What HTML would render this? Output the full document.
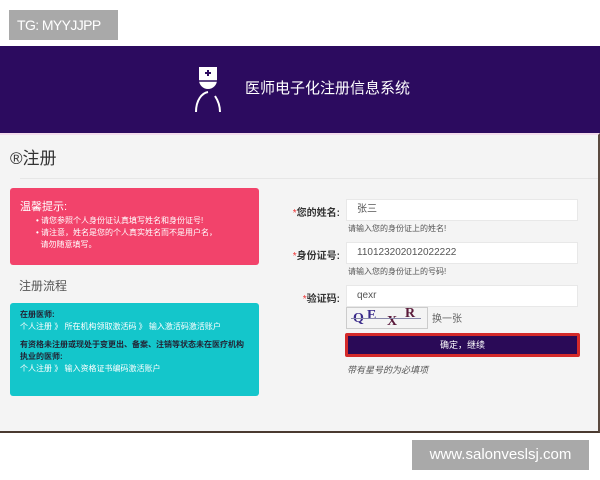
<!DOCTYPE html>
<html><head><meta charset="utf-8"><style>
*{margin:0;padding:0;box-sizing:border-box}
body{width:600px;height:480px;background:#fff;position:relative;overflow:hidden;font-family:"Liberation Sans","Noto Sans CJK SC",sans-serif}
.a{position:absolute}
.wm{background:#a9a9a9;color:#fff;font-size:16px;line-height:30px;white-space:nowrap}
.lbl{font-size:10px;color:#333;font-weight:bold;text-align:right;width:90px}
.lbl span{color:#e33;font-weight:normal}
.inp{background:#fff;border:1px solid #e8e8e8;height:22px;width:232px;font-size:10px;color:#555;padding-left:10px;line-height:20px}
.hint{font-size:8px;color:#555}
</style></head><body>
<div class="a wm" style="left:9px;top:10px;width:109px;height:30px;padding-left:8px;font-size:14px;letter-spacing:-0.6px">TG: MYYJJPP</div>
<div class="a" style="left:0;top:46px;width:600px;height:87px;background:#2c0b5f"></div>
<svg class="a" style="left:190px;top:62px" width="40" height="54" viewBox="0 0 40 54">
<path d="M9 5 H27 V18 A9 9 0 0 1 9 18 Z" fill="#fff"/>
<path d="M9 19 H27" stroke="#2c0b5f" stroke-width="1.5"/>
<path d="M18 8 V14 M15 11 H21" stroke="#2c0b5f" stroke-width="2"/>
<path d="M6 50 C6 38 12 31 18 30 M30 50 C30 42 27 37 25 34" stroke="#fff" stroke-width="2" fill="none"/>
</svg>
<div class="a" style="left:245px;top:78px;color:#fff;font-size:15px;line-height:22px">医师电子化注册信息系统</div>
<div class="a" style="left:0;top:133px;width:600px;height:300px;background:#f4f4f4;border-top:2px solid #f3dcec;border-bottom:2px solid #4a3a30;border-right:2px solid #5a4a40"></div>
<div class="a" style="left:10px;top:147px;font-size:17px;color:#333;line-height:24px">®注册</div>
<div class="a" style="left:20px;top:178px;width:578px;height:1px;background:#e6e6e6"></div>
<div class="a" style="left:10px;top:188px;width:249px;height:77px;background:#f2436b;border-radius:3px;color:#fff">
<div style="position:absolute;left:10px;top:10px;font-size:11px">温馨提示:</div>
<div style="position:absolute;left:26px;top:27px;font-size:8px;line-height:12px">• 请您参照个人身份证认真填写姓名和身份证号!<br>• 请注意，姓名是您的个人真实姓名而不是用户名，<br>&nbsp;&nbsp;请勿随意填写。</div></div>
<div class="a" style="left:19px;top:277px;font-size:12px;color:#555">注册流程</div>
<div class="a" style="left:10px;top:303px;width:249px;height:93px;background:#14c6cb;border-radius:3px;font-size:8px;line-height:12px;padding:6px 10px;color:#fff">
<b style="color:#223">在册医师:</b><br>个人注册 》 所在机构领取激活码 》 输入激活码激活账户<br><div style="height:6px"></div><b style="color:#223">有资格未注册或现处于变更出、备案、注销等状态未在医疗机构执业的医师:</b><br>个人注册 》 输入资格证书编码激活账户</div>
<div class="a lbl" style="left:250px;top:204px"><span>*</span>您的姓名:</div>
<div class="a inp" style="left:346px;top:199px">张三</div>
<div class="a hint" style="left:348px;top:223px">请输入您的身份证上的姓名!</div>
<div class="a lbl" style="left:250px;top:247px"><span>*</span>身份证号:</div>
<div class="a inp" style="left:346px;top:242px">110123202012022222</div>
<div class="a hint" style="left:348px;top:266px">请输入您的身份证上的号码!</div>
<div class="a lbl" style="left:250px;top:290px"><span>*</span>验证码:</div>
<div class="a inp" style="left:346px;top:285px">qexr</div>
<div class="a" style="left:346px;top:307px;width:82px;height:22px;background:#f4f4f4;border:1px solid #ccc;font-family:'Liberation Serif',serif;font-weight:bold;font-size:14px;color:#3a2a8a"><span style="position:absolute;left:6px;top:3px">Q</span><span style="position:absolute;left:20px;top:0">E</span><span style="position:absolute;left:40px;top:6px;color:#5a1a3a">X</span><span style="position:absolute;left:58px;top:-2px;color:#5a1a3a">R</span><div style="position:absolute;left:4px;top:10px;width:70px;height:1px;background:#88a"></div></div>
<div class="a" style="left:432px;top:310px;font-size:10px;color:#666">换一张</div>
<div class="a" style="left:345px;top:333px;width:235px;height:24px;background:#2a0a57;border:3px solid #d42a2a;border-radius:2px;color:#fff;font-size:9px;text-align:center;line-height:18px">确定，继续</div>
<div class="a" style="left:347px;top:363px;font-size:9px;color:#555;font-style:italic">带有星号的为必填项</div>
<div class="a wm" style="left:412px;top:440px;width:177px;height:30px;text-align:center;font-size:15px">www.salonveslsj.com</div>
</body></html>
